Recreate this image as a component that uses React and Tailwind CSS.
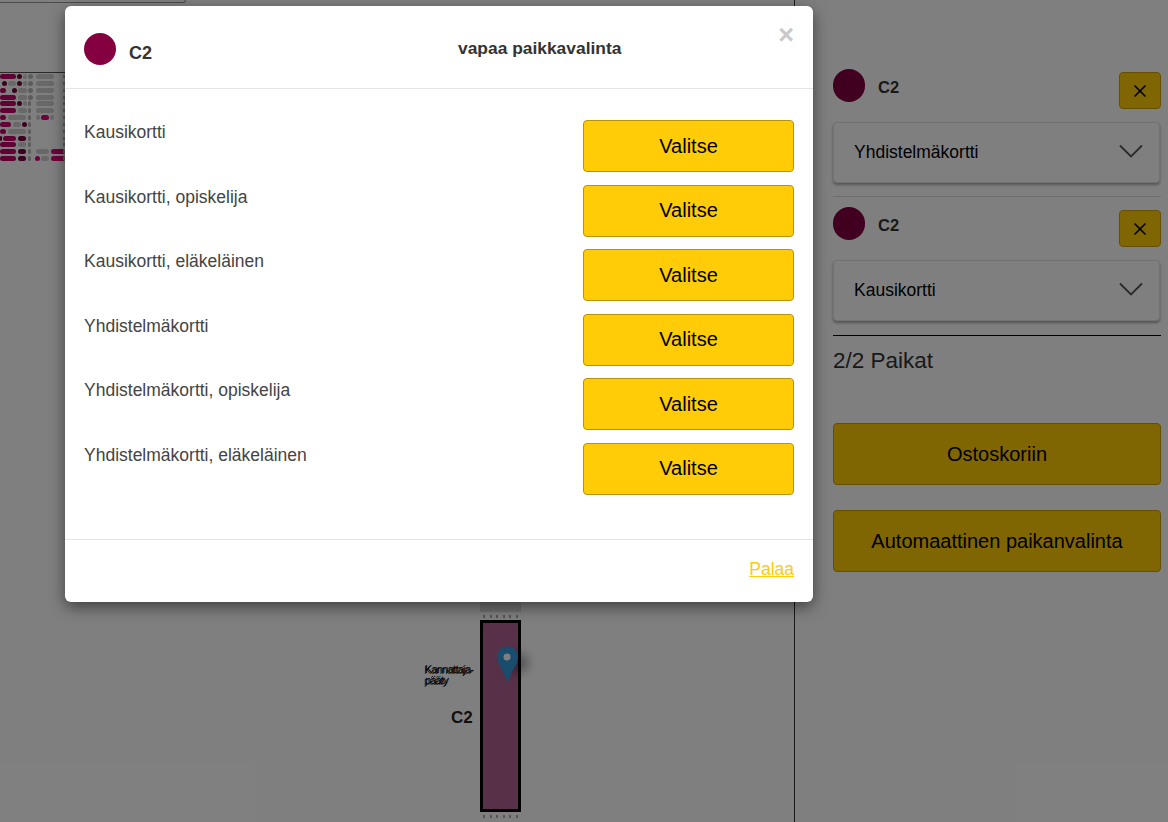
import { X } from 'lucide-react'

const tickets = [
  'Kausikortti',
  'Kausikortti, opiskelija',
  'Kausikortti, eläkeläinen',
  'Yhdistelmäkortti',
  'Yhdistelmäkortti, opiskelija',
  'Yhdistelmäkortti, eläkeläinen',
]

// seat rows peeking out left of the dialog: [colour, x, width]
const seatRows = [
  [['p', 0, 16], ['d', 17, 5], ['g', 23, 4], ['t', 28, 5], ['g', 36, 18]],
  [['d', 2, 5], ['g', 8, 8], ['d', 17, 5], ['g', 23, 4], ['t', 28, 5], ['g', 36, 18]],
  [['p', 0, 6], ['d', 12, 5], ['g', 18, 9], ['t', 28, 5], ['g', 36, 18]],
  [['p', 0, 16], ['g', 18, 9], ['t', 28, 5], ['g', 36, 18]],
  [['p', 0, 16], ['d', 17, 5], ['g', 23, 4], ['t', 28, 3], ['g', 36, 18]],
  [['p', 0, 16], ['g', 18, 9], ['t', 28, 3], ['g', 36, 18]],
  [['p', 0, 6], ['g', 8, 18], ['t', 28, 3], ['g', 36, 4], ['m', 41, 8], ['g', 50, 4]],
  [['p', 0, 11], ['g', 13, 8], ['d', 22, 5], ['t', 28, 3]],
  [['p', 0, 6], ['g', 8, 18], ['t', 28, 3]],
  [['d', 0, 2], ['p', 3, 13], ['d', 18, 8], ['t', 28, 3]],
  [['p', 0, 16], ['g', 18, 8], ['t', 28, 3]],
  [['p', 0, 16], ['d', 18, 8], ['t', 28, 3], ['g', 36, 13], ['m', 51, 14]],
  [['p', 0, 16], ['d', 18, 8], ['t', 28, 3], ['m', 35, 5], ['g', 41, 8], ['m', 51, 14]],
]

const seatColors = { p: 'bg-[#c4006c]', d: 'bg-[#780040]', m: 'bg-[#e0007c]', g: 'bg-[#d0d0d0]', t: 'bg-[#b8b8b8]' }

function SeatMapFragment() {
  return (
    <div className="absolute left-0 top-[72px] h-[90px] w-[70px] border-t border-[#555555]">
      {seatRows.map((row, i) => (
        <div key={i} className="relative h-[6.85px]">
          {row.map(([c, x, w], j) => (
            <span key={j} className={`absolute top-[1px] h-[5px] rounded-full ${seatColors[c]}`} style={{ left: x, width: w }} />
          ))}
          <span className="absolute left-[63px] top-[2px] h-[3px] w-[2px] bg-[#b8b8b8]" />
        </div>
      ))}
    </div>
  )
}

function TickRow() {
  return (
    <div className="flex h-[8px] items-center justify-between px-[3px]">
      {[0, 1, 2, 3, 4, 5].map(i => <span key={i} className="h-[3px] w-[2px] bg-[#aaaaaa]" />)}
    </div>
  )
}

function StandLabel({ className }) {
  return (
    <div className={`absolute text-[11px] leading-[11px] tracking-[-0.7px] text-black ${className}`}>
      Kannattaja-<br />pääty
    </div>
  )
}

function StandBlock() {
  return (
    <div className="absolute left-[424px] top-[600px] w-[100px]">
      <div className="ml-[56px] w-[41px]">
        <div className="h-[12px] bg-[#dedede]" />
        <TickRow />
        <div className="relative h-[192px] border-[3px] border-black bg-[#b06290]">
          <span className="absolute left-[22px] top-[30px] h-[20px] w-[24px] rounded-full bg-black/30 blur-[5px]" />
          <svg className="absolute left-[13px] top-[23px]" width="23" height="38" viewBox="0 0 23 38">
            <path d="M11.500 0.500C5.200 0.500 1 5.300 1 11c0 8 7.500 14 10.500 26.500C14.500 25 22 19 22 11 22 5.300 17.800 0.500 11.500 0.500z" fill="#3498dc" />
            <circle cx="11" cy="11" r="3.500" fill="#ffffff" />
          </svg>
        </div>
        <TickRow />
      </div>
      <StandLabel className="left-[1px] top-[64px]" />
      <StandLabel className="left-0 top-[64.500px] opacity-70" />
      <div className="absolute left-[27px] top-[105px] text-[17px] font-bold text-[#222222]">C2</div>
    </div>
  )
}

function CartItem({ label }) {
  return (
    <div>
      <div className="flex items-center justify-between">
        <div className="flex items-center">
          <span className="mb-[5px] h-[33px] w-[32px] rounded-full bg-[#850040]" />
          <span className="ml-[13px] text-[16.500px] font-bold text-[#333333]">C2</span>
        </div>
        <button className="mt-[6px] flex h-[37px] w-[42px] items-center justify-center rounded-[4px] border border-[#c9a000] bg-[#ffcc07] text-black">
          <X size={20} strokeWidth={2} />
        </button>
      </div>
      <div className="mt-[13px] flex h-[61px] w-[327px] items-center justify-between rounded-[4px] border border-[#e4e4e4] bg-white pl-[20px] pr-[16px] text-[17.500px] text-black shadow-[0_2px_3px_rgba(0,0,0,0.35)]">
        {label}
        <svg className="mb-[3px]" width="24" height="14" viewBox="0 0 24 14" fill="none" stroke="#555555" strokeWidth="1.800">
          <path d="M1 1.500 12 12.500 23 1.500" />
        </svg>
      </div>
    </div>
  )
}

function Sidebar() {
  return (
    <aside className="w-[373px] pl-[38px] pr-[7px] pt-[66px]">
      <CartItem label="Yhdistelmäkortti" />
      <div className="mb-[7px] mt-[13px] border-t border-[#dddddd]" />
      <CartItem label="Kausikortti" />
      <div className="mt-[14px] border-t border-black" />
      <p className="mt-[11px] text-[22.500px] leading-[27px] text-[#333333]">2/2 Paikat</p>
      <button className="mt-[49px] h-[62px] w-full rounded-[4px] border border-[#c9a000] bg-[#ffcc07] text-[20px] text-black">Ostoskoriin</button>
      <button className="mt-[25px] h-[62px] w-full rounded-[4px] border border-[#c9a000] bg-[#ffcc07] text-[20px] text-black">Automaattinen paikanvalinta</button>
    </aside>
  )
}

function Dialog() {
  return (
    <div className="absolute left-[65px] top-[6px] h-[596px] w-[748px] rounded-[6px] bg-white shadow-[0_5px_15px_rgba(0,0,0,0.5)]">
      <div className="relative flex h-[83px] items-center border-b border-[#e5e5e5] pl-[19px]">
        <span className="mt-[3px] h-[32px] w-[32px] rounded-full bg-[#850040]" />
        <span className="ml-[13px] mt-[11px] w-[100px] text-[18px] font-bold leading-[20px] text-[#333333]">C2</span>
        <span className="ml-[229px] mt-[3px] text-[17.400px] font-bold text-[#333333]">vapaa paikkavalinta</span>
        <span className="absolute right-[19px] top-[16px] text-[27px] font-bold leading-[26px] text-[#c9c9c9]">×</span>
      </div>
      <div className="flex flex-col gap-[12.500px] px-[19px] pt-[31px]">
        {tickets.map(t => (
          <div key={t} className="flex items-start justify-between">
            <span className="pt-[2px] text-[17.500px] leading-[20px] text-[#444444]">{t}</span>
            <button className="h-[52px] w-[211px] rounded-[4px] border border-[#b8930a] bg-[#ffcc07] pb-[1px] text-[20px] text-black">Valitse</button>
          </div>
        ))}
      </div>
      <div className="mt-[44px] flex justify-end border-t border-[#e5e5e5] pr-[19px] pt-[19px]">
        <a className="text-[17.500px] leading-[20px] text-[#ffcc07] underline">Palaa</a>
      </div>
    </div>
  )
}

export default function App() {
  return (
    <div className="relative flex h-[822px] w-[1168px] overflow-hidden bg-white font-['Liberation_Sans',Arial,sans-serif]">
      <main className="relative w-[795px] border-r border-[#333333]">
        <div className="h-[3px] w-[186px] rounded-br-[4px] border-b border-r border-[#999999]" />
        <SeatMapFragment />
        <StandBlock />
      </main>
      <Sidebar />
      <div className="absolute inset-0 bg-black/50" />
      <Dialog />
    </div>
  )
}
